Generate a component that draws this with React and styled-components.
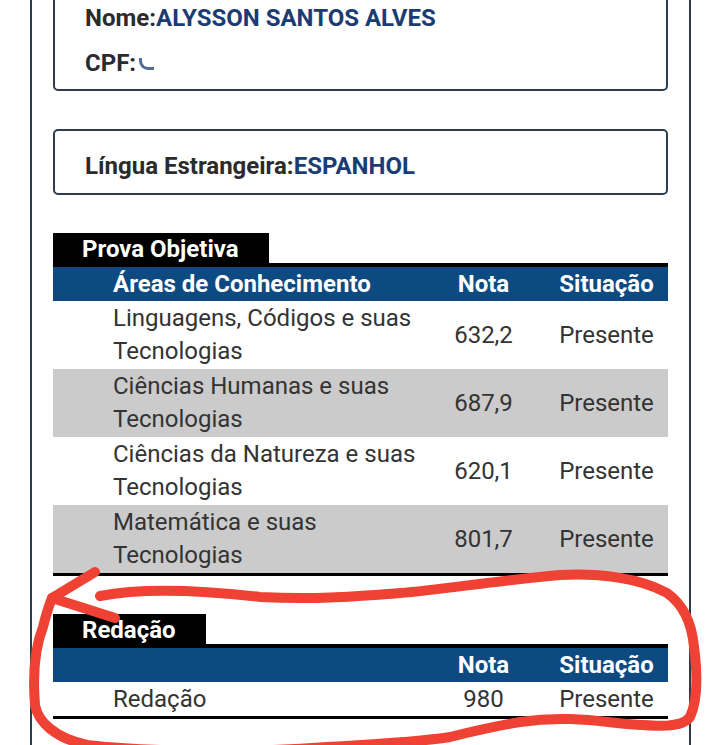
import React from "react";
import styled, { createGlobalStyle } from "styled-components";

const GlobalStyle = createGlobalStyle`
  html, body {
    margin: 0;
    padding: 0;
    background: #ffffff;
    font-family: Roboto, "Liberation Sans", Arial, sans-serif;
    overflow: hidden;
  }
`;

const Page = styled.div`
  position: relative;
  width: 720px;
  height: 745px;
  overflow: hidden;
`;

// painel do boletim (a página já está rolada, por isso o topo fica cortado)
const Panel = styled.div`
  box-sizing: border-box;
  width: 661px;
  margin: -26px 0 0 30px;
  padding: 0 21px 60px 21px;
  border-left: 2px solid #2d3d4d;
  border-right: 2px solid #2d3d4d;
  min-height: 820px;
`;

const InfoCard = styled.div`
  border: 2px solid #2d3d4d;
  border-radius: 5px;
  padding: ${(p) => p.$pad};
  margin-top: ${(p) => p.$top || "0"};
`;

const InfoLine = styled.div`
  font-size: 24px;
  font-weight: 700;
  line-height: ${(p) => p.$lh || "45px"};
  color: #2b2b2b;
  white-space: nowrap;
`;

const Value = styled.span`
  color: #1b3c73;
`;

// CPF borrado no print original
const CpfMask = styled.span`
  display: inline-block;
  width: 12px;
  height: 9px;
  margin-left: 3px;
  border-left: 3px solid #1b3c73;
  border-bottom: 3px solid #1b3c73;
  border-bottom-left-radius: 9px;
  opacity: 0.75;
  filter: blur(0.5px);
  vertical-align: 1px;
`;

const Section = styled.section`
  margin-top: 38px;
`;

const Tab = styled.div`
  display: inline-block;
  box-sizing: border-box;
  height: 30px;
  padding: 0 30px 0 29px;
  background: #000;
  color: #fff;
  font-size: 24px;
  font-weight: 700;
  line-height: 32px;
  vertical-align: bottom;
`;

const Table = styled.div`
  border-top: 4px solid #000;
  border-bottom: 3px solid #000;
`;

const Row = styled.div`
  display: grid;
  grid-template-columns: 1fr 123px 123px;
  align-items: center;
  min-height: ${(p) => p.$h};
  background: ${(p) => p.$bg || "#ffffff"};
  color: #333;
  font-size: 24px;
  line-height: 33px;
`;

const HeadRow = styled(Row)`
  background: #0e4a82;
  color: #fff;
  font-weight: 700;
  line-height: 34px;
`;

const AreaCell = styled.div`
  padding: 0 0 0 60px;
`;

const Cell = styled.div`
  text-align: center;
  white-space: nowrap;
`;

const Scribble = styled.svg`
  position: absolute;
  left: 0;
  top: 0;
  pointer-events: none;
`;

const areas = [
  { name: "Linguagens, Códigos e suas Tecnologias", nota: "632,2" },
  { name: "Ciências Humanas e suas Tecnologias", nota: "687,9" },
  { name: "Ciências da Natureza e suas Tecnologias", nota: "620,1" },
  { name: "Matemática e suas Tecnologias", nota: "801,7" },
];

export default function App() {
  return (
    <Page>
      <GlobalStyle />
      <Panel>
        <InfoCard $pad="20px 30px 3px">
          <InfoLine>
            Nome:<Value>ALYSSON SANTOS ALVES</Value>
          </InfoLine>
          <InfoLine>
            CPF:<CpfMask />
          </InfoLine>
        </InfoCard>

        <InfoCard $pad="20px 30px 12px" $top="38px">
          <InfoLine $lh="30px">
            Língua Estrangeira:<Value>ESPANHOL</Value>
          </InfoLine>
        </InfoCard>

        <Section>
          <Tab>Prova Objetiva</Tab>
          <Table>
            <HeadRow $h="34px">
              <AreaCell>Áreas de Conhecimento</AreaCell>
              <Cell>Nota</Cell>
              <Cell>Situação</Cell>
            </HeadRow>
            {areas.map((a, i) => (
              <Row key={a.name} $h="68px" $bg={i % 2 ? "#cbcbcb" : "#ffffff"}>
                <AreaCell>{a.name}</AreaCell>
                <Cell>{a.nota}</Cell>
                <Cell>Presente</Cell>
              </Row>
            ))}
          </Table>
        </Section>

        <Section>
          <Tab>Redação</Tab>
          <Table>
            <HeadRow $h="34px">
              <AreaCell />
              <Cell>Nota</Cell>
              <Cell>Situação</Cell>
            </HeadRow>
            <Row $h="34px">
              <AreaCell>Redação</AreaCell>
              <Cell>980</Cell>
              <Cell>Presente</Cell>
            </Row>
          </Table>
        </Section>
      </Panel>

      <Scribble width="720" height="745" viewBox="0 0 720 745">
        <g fill="none" stroke="#ef4134" strokeWidth="10" strokeLinecap="round" strokeLinejoin="round">
          <path d="M100 596 C140 588 200 590 260 597 C320 600 360 596 400 593 C440 590 500 580 560 575 C600 573 640 578 667 593 C684 605 692 625 694 647 C697 670 698 700 690 717 C682 728 660 727 617 723 C590 720 560 716 520 722 C490 727 470 732 450 737 C420 742 380 744 327 747 C250 753 150 752 87 745 C55 738 38 722 35 705 C33 680 34 650 43 627 C46 615 49 605 52 598" />
          <path d="M95 572 L52 598 L115 618" />
        </g>
      </Scribble>
    </Page>
  );
}
